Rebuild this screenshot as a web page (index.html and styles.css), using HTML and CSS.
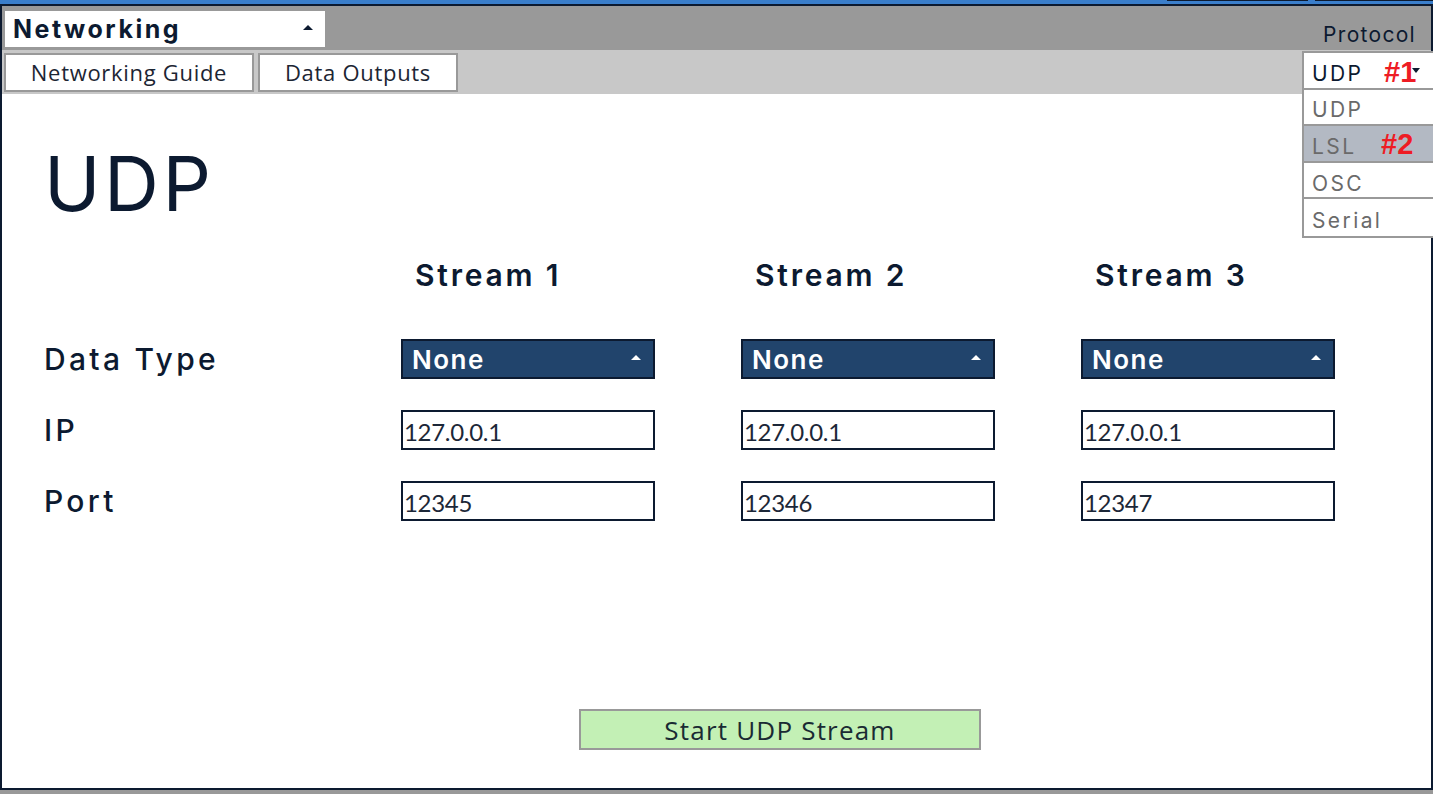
FILE: index.html
```html
<!DOCTYPE html>
<html>
<head>
<meta charset="utf-8">
<link rel="stylesheet" href="styles.css">
</head>
<body>
<div class="topstrip">
  <span class="strip-seg seg-a"></span>
  <span class="strip-seg seg-b"></span>
</div>
<div class="frame">
  <div class="bar1">
    <div class="widget-select">
      <span class="widget-name">Networking</span>
      <span class="tri-up"></span>
    </div>
    <span class="protocol-label">Protocol</span>
  </div>
  <div class="bar2">
    <div class="tab">Networking Guide</div>
    <div class="tab">Data Outputs</div>
  </div>
  <div class="content">
    <h1 class="title">UDP</h1>
    <div class="grid">
      <div class="cell"></div>
      <div class="stream-head">Stream 1</div>
      <div class="stream-head">Stream 2</div>
      <div class="stream-head">Stream 3</div>

      <div class="row-label">Data Type</div>
      <div class="dd"><span>None</span><span class="tri-up white"></span></div>
      <div class="dd"><span>None</span><span class="tri-up white"></span></div>
      <div class="dd"><span>None</span><span class="tri-up white"></span></div>

      <div class="row-label">IP</div>
      <div class="field">127.0.0.1</div>
      <div class="field">127.0.0.1</div>
      <div class="field">127.0.0.1</div>

      <div class="row-label">Port</div>
      <div class="field">12345</div>
      <div class="field">12346</div>
      <div class="field">12347</div>
    </div>
    <div class="btn-wrap">
      <div class="start-btn">Start UDP Stream</div>
    </div>
  </div>
  <div class="proto-menu">
    <div class="pm-item pm-selected"><span>UDP</span><span class="tri-down"></span><span class="annot a1">#1</span></div>
    <div class="pm-item">UDP</div>
    <div class="pm-item pm-hover"><span>LSL</span><span class="annot a2">#2</span></div>
    <div class="pm-item">OSC</div>
    <div class="pm-item">Serial</div>
  </div>
</div>
<div class="bottom"></div>
</body>
</html>
```
FILE: styles.css
```css
* { box-sizing: border-box; }
html, body { margin: 0; padding: 0; }
body {
  width: 1433px;
  height: 794px;
  overflow: hidden;
  background: #ffffff;
  font-family: Inter, "Liberation Sans", sans-serif;
  color: #0c1a30;
}
.topstrip {
  height: 4px;
  background: #3a7ecb;
  position: relative;
}
.strip-seg {
  position: absolute;
  top: 0;
  height: 1px;
  background: #0c1a30;
}
.seg-a { left: 1167px; width: 141px; }
.seg-b { left: 1315px; width: 118px; }
.frame {
  position: relative;
  height: 786px;
  border: 2px solid #0c1a30;
  display: flex;
  flex-direction: column;
}
.bar1 {
  height: 44px;
  background: #999999;
  display: flex;
  align-items: flex-start;
  padding: 5px 0 0 3px;
}
.widget-select {
  width: 320px;
  height: 36px;
  background: #ffffff;
  display: flex;
  align-items: center;
  justify-content: space-between;
  padding: 0 12px 0 8px;
}
.widget-name {
  font-weight: 700;
  font-size: 25px;
  letter-spacing: 2.5px;
  color: #0c1a30;
}
.tri-up {
  width: 0; height: 0;
  border-left: 5px solid transparent;
  border-right: 5px solid transparent;
  border-bottom: 5px solid #0c1a30;
  margin-bottom: 4px;
}
.tri-up.white { border-bottom-color: #ffffff; }
.protocol-label {
  margin-left: auto;
  margin-right: 15px;
  margin-top: 11px;
  font-size: 21px;
  letter-spacing: 1.3px;
  color: #0c1a30;
}
.bar2 {
  height: 44px;
  background: #c8c8c8;
  display: flex;
  gap: 4px;
  padding: 3px 0 0 2px;
}
.tab {
  height: 39px;
  background: #ffffff;
  border: 2px solid #999999;
  font-family: "Open Sans", "Liberation Sans", sans-serif;
  font-size: 22px;
  letter-spacing: 0.7px;
  color: #1c2533;
  display: flex;
  align-items: center;
  justify-content: center;
  padding-bottom: 2px;
}
.tab:nth-child(1) { width: 250px; }
.tab:nth-child(2) { width: 200px; }
.content {
  flex: 1;
  display: flex;
  flex-direction: column;
  padding-left: 42px;
}
.title {
  margin: 43px 0 0 0;
  font-size: 76px;
  font-weight: 400;
  line-height: 92px;
  letter-spacing: 3.5px;
  color: #0c1a30;
}
.grid {
  margin-top: 19px;
  display: grid;
  grid-template-columns: 271px 254px 254px 254px;
  column-gap: 86px;
  grid-template-rows: 60px 40px 40px 40px;
  row-gap: 31px;
}
.stream-head {
  font-size: 30px;
  font-weight: 600;
  letter-spacing: 2.8px;
  padding-left: 14px;
  line-height: 36px;
  margin-top: 9px;
}
.row-label {
  font-size: 30px;
  font-weight: 500;
  letter-spacing: 3.3px;
  line-height: 40px;
}
.dd {
  background: #21446c;
  border: 2px solid #0c1a30;
  display: flex;
  align-items: center;
  justify-content: space-between;
  padding: 0 12px 0 9px;
  color: #ffffff;
  font-size: 26px;
  font-weight: 600;
  letter-spacing: 1.5px;
}
.field {
  border: 2px solid #0c1a30;
  background: #ffffff;
  font-family: Lato, "Liberation Sans", sans-serif;
  font-weight: 400;
  font-size: 24px;
  display: flex;
  align-items: center;
  padding-left: 1px;
  padding-top: 3px;
  color: #1c2738;
  letter-spacing: -0.3px;
}
.grid .field:nth-child(n+9):nth-child(-n+12) { }
.btn-wrap {
  margin-top: auto;
  margin-bottom: 38px;
  display: flex;
  padding-left: 535px;
}
.start-btn {
  width: 402px;
  height: 41px;
  background: #c3f0b5;
  border: 2px solid #999999;
  font-family: "Open Sans", "Liberation Sans", sans-serif;
  font-size: 26px;
  letter-spacing: 1.2px;
  color: #1a2a33;
  display: flex;
  align-items: center;
  justify-content: center;
}
.bottom {
  height: 4px;
  background: #999999;
}
.proto-menu {
  position: absolute;
  top: 45px;
  right: -2px;
  width: 131px;
  border: 2px solid #999999;
  border-right: none;
  background: #ffffff;
}
.pm-item {
  height: 36.6px;
  border-bottom: 2px solid #999999;
  display: flex;
  align-items: center;
  padding-left: 8px;
  padding-top: 6px;
  font-size: 21px;
  letter-spacing: 2.4px;
  color: #6a6a6a;
  position: relative;
}
.pm-item:last-child { border-bottom: none; }
.pm-selected { color: #0c1a30; }
.pm-hover { background: #b3b9c3; }
.tri-down {
  position: absolute;
  left: 108px;
  top: 15px;
  width: 0; height: 0;
  border-left: 4px solid transparent;
  border-right: 4px solid transparent;
  border-top: 5px solid #0c1a30;
}
.annot {
  position: absolute;
  color: #ee1c24;
  font-family: "Liberation Sans", sans-serif;
  font-weight: 700;
  font-size: 29px;
  letter-spacing: 0;
}
.a1 { left: 80px; top: 3px; }
.a2 { left: 77px; top: 2px; }
```
